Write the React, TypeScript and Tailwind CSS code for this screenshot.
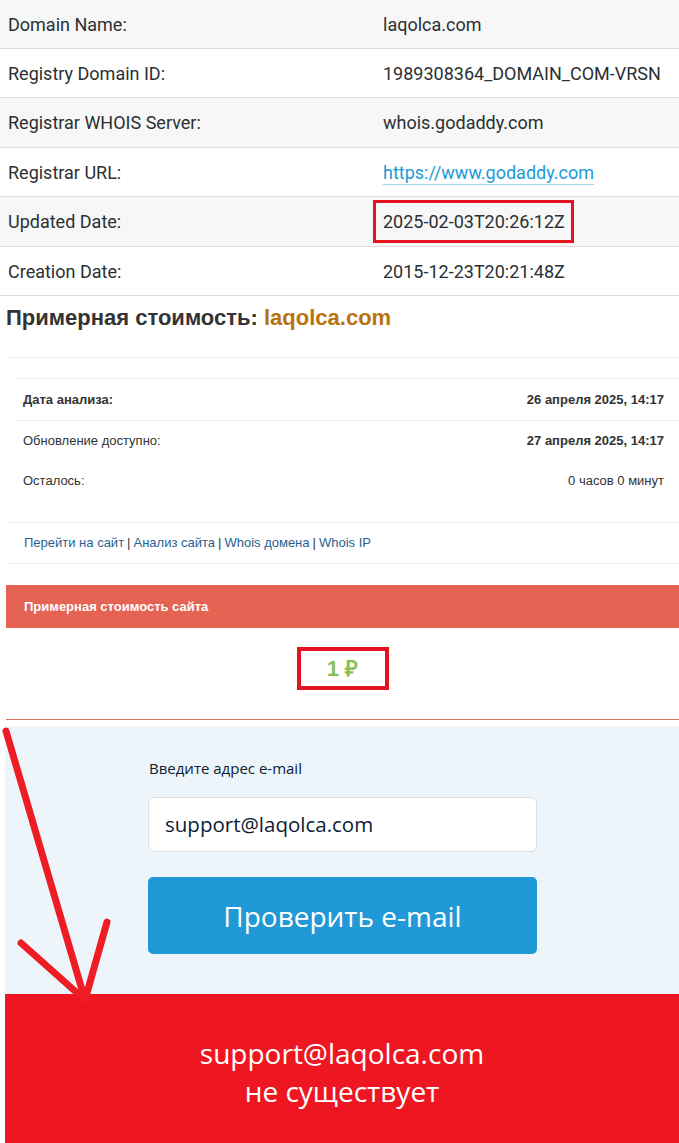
import React from "react";

const rows: { label: string; value: React.ReactNode; h: string; bg: string }[] = [
  { label: "Domain Name:", value: "laqolca.com", h: "h-[49px]", bg: "bg-[#f7f7f7]" },
  { label: "Registry Domain ID:", value: "1989308364_DOMAIN_COM-VRSN", h: "h-[49px]", bg: "bg-white" },
  { label: "Registrar WHOIS Server:", value: "whois.godaddy.com", h: "h-[50px]", bg: "bg-[#f7f7f7]" },
  {
    label: "Registrar URL:",
    value: (
      <span className="text-[#1c9ad6] border-b border-[#9fd3ee] pb-[1px]">https://www.godaddy.com</span>
    ),
    h: "h-[49px]",
    bg: "bg-white",
  },
  {
    label: "Updated Date:",
    value: (
      <span className="relative inline-block">
        2025-02-03T20:26:12Z
        <span className="absolute left-[-10px] right-[-9px] top-[-8px] bottom-[-8px] border-[3px] border-[#e3141f]" />
      </span>
    ),
    h: "h-[50px]",
    bg: "bg-[#f7f7f7]",
  },
  { label: "Creation Date:", value: "2015-12-23T20:21:48Z", h: "h-[49px]", bg: "bg-white" },
];

export default function App() {
  return (
    <div className="relative w-[679px] h-[1143px] overflow-hidden bg-white">
      {/* WHOIS table */}
      <div className="font-['Roboto',sans-serif] text-[18px] text-[#2b2f33]">
        {rows.map((r) => (
          <div key={r.label} className={`flex items-center border-b border-[#dcdcdc] ${r.h} ${r.bg}`}>
            <div className="w-[383px] pl-[8px]">{r.label}</div>
            <div>{r.value}</div>
          </div>
        ))}
      </div>

      {/* Estimate */}
      <div className="pl-[6px] font-['Liberation_Sans',Arial,sans-serif]">
        <h2 className="h-[61px] flex items-center pt-[12px] pb-[29px] text-[22px] font-bold text-[#333] leading-none">
          Примерная стоимость:&nbsp;<span className="text-[#b8720f]">laqolca.com</span>
        </h2>
        <div className="border-t border-[#eeeeee] pt-[20px]">
          <div className="ml-[8px] border-t border-[#eeeeee] text-[13px] text-[#333]">
            <div className="flex justify-between items-center h-[42px] border-b border-[#eeeeee] pl-[9px] pr-[15px] font-bold">
              <span>Дата анализа:</span>
              <span>26 апреля 2025, 14:17</span>
            </div>
            <div className="flex justify-between items-center h-[40px] pl-[9px] pr-[15px]">
              <span>Обновление доступно:</span>
              <span className="font-bold">27 апреля 2025, 14:17</span>
            </div>
            <div className="flex justify-between items-center h-[40px] pl-[9px] pr-[15px]">
              <span>Осталось:</span>
              <span>0 часов 0 минут</span>
            </div>
          </div>
          <div className="h-[21px]" />
          <div className="border-t border-b border-[#eeeeee] h-[42px] flex items-center pl-[18px] text-[13px] text-[#2a5f8f]">
            <span>Перейти на сайт</span>
            <span className="text-[#333] mx-[3px]">|</span>
            <span>Анализ сайта</span>
            <span className="text-[#333] mx-[3px]">|</span>
            <span>Whois домена</span>
            <span className="text-[#333] mx-[3px]">|</span>
            <span>Whois IP</span>
          </div>
        </div>
        <div className="h-[21px]" />
        <div className="h-[43px] bg-[#e46353] flex items-center pl-[18px] text-[13px] font-bold text-white">
          Примерная стоимость сайта
        </div>
        <div className="h-[91px] flex justify-center pt-[19px]">
          <div className="w-[92px] h-[43px] border-[4px] border-[#e3141f] flex items-center justify-center text-[22px] font-bold text-[#86c157]">
            1 ₽
          </div>
        </div>
        <div className="h-px bg-[#e0705f]" />
      </div>

      {/* Email check */}
      <div className="mt-[6px] ml-[5px] h-[268px] bg-[#eef5fa] font-['Open_Sans',sans-serif]">
        <div className="w-[389px] ml-[143px] pt-[30px]">
          <div className="text-[15px] text-[#0c2134] leading-[24px] pl-[1px]">Введите адрес e-mail</div>
          <div className="mt-[17px] h-[55px] bg-white rounded-[6px] border border-[#dcdfe2] flex items-center pl-[16px] text-[20.5px] text-[#0c2134]">
            support@laqolca.com
          </div>
          <div className="mt-[25px] h-[77px] bg-[#2199d6] rounded-[5px] flex items-center justify-center text-[28px] text-white">
            Проверить e-mail
          </div>
        </div>
      </div>
      <div className="ml-[5px] h-[149px] bg-[#ee1621] flex flex-col items-center pt-[40px] font-['Open_Sans',sans-serif] text-[28px] text-white leading-[38px]">
        <div>support@laqolca.com</div>
        <div>не существует</div>
      </div>

      {/* Annotation arrow */}
      <svg className="absolute left-0 top-0 pointer-events-none" width="679" height="1143">
        <g stroke="#ee1c25" strokeWidth="7" strokeLinecap="round" fill="none">
          <line x1="6" y1="731" x2="85" y2="1000" />
          <line x1="21" y1="943" x2="85" y2="1000" />
          <line x1="107" y1="922" x2="85" y2="1000" />
        </g>
      </svg>
    </div>
  );
}
